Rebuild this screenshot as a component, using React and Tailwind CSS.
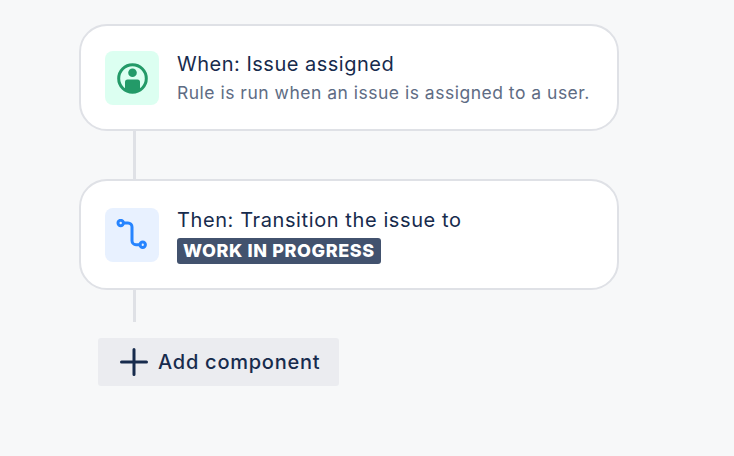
function UserIcon() {
    return (
        <svg width="32" height="32" viewBox="0 0 32 32" fill="none">
            <circle cx="16.5" cy="16.5" r="13.8" stroke="#239A68" strokeWidth="3" />
            <circle cx="16.5" cy="10.8" r="4.3" fill="#239A68" />
            <path d="M9 20a2.5 2.5 0 0 1 2.5-2.5h10a2.5 2.5 0 0 1 2.5 2.5v8a14 14 0 0 1-15 0z" fill="#239A68" />
        </svg>
    );
}

function RouteIcon() {
    return (
        <svg width="32" height="32" viewBox="0 0 32 32" fill="none" stroke="#2684FF" strokeWidth="3">
            <circle cx="4.7" cy="4" r="2.7" />
            <circle cx="26.7" cy="25.7" r="2.7" />
            <path d="M7.5 4h4.5a4 4 0 0 1 4 4v13.7a4 4 0 0 0 4 4h4" strokeLinecap="round" />
        </svg>
    );
}

function PlusIcon() {
    return (
        <svg width="28" height="28" viewBox="0 0 28 28" className="shrink-0" stroke="#172b4d" strokeWidth="3" strokeLinecap="round">
            <path d="M14 1.5v25M1.5 14h25" />
        </svg>
    );
}

function Connector({ height }) {
    return <div className={`ml-[54px] w-[3px] bg-[#dfe1e6] ${height}`}></div>;
}

export default function App() {
    return (
        <div className="min-h-screen bg-[#f7f8f9] pt-6 pl-[79px] font-['Inter',sans-serif]">
            <div className="w-[540px]">
                <div className="flex h-[107px] items-start rounded-[28px] border-2 border-[#dfe1e6] bg-white pt-[25px] pl-6">
                    <div className="flex h-[54px] w-[54px] shrink-0 items-center justify-center rounded-lg bg-[#dcfff1]">
                        <UserIcon />
                    </div>
                    <div className="mt-[1px] ml-[18px]">
                        <div className="text-[20px] leading-6 tracking-[0.5px] text-[#172b4d]">When: Issue assigned</div>
                        <div className="mt-[6px] text-[17.5px] leading-[22px] tracking-[0.5px] text-[#5e6c84]">Rule is run when an issue is assigned to a user.</div>
                    </div>
                </div>
                <Connector height="h-[48px]" />
                <div className="flex h-[111px] items-start rounded-[28px] border-2 border-[#dfe1e6] bg-white pt-[27px] pl-6">
                    <div className="flex h-[54px] w-[54px] shrink-0 items-center justify-center rounded-lg bg-[#e8f1ff]">
                        <RouteIcon />
                    </div>
                    <div className="ml-[18px]">
                        <div className="text-[20px] leading-6 tracking-[0.6px] text-[#172b4d]">Then: Transition the issue to</div>
                        <div className="mt-[6px] flex">
                            <span className="rounded-[3px] bg-[#42526e] px-[6px] text-[18px] leading-[26px] font-extrabold tracking-[0.6px] text-white">WORK IN PROGRESS</span>
                        </div>
                    </div>
                </div>
                <Connector height="h-[32px]" />
                <button className="mt-4 ml-[19px] flex h-12 w-[241px] items-center rounded-[3px] bg-[#ebecf0] pl-[22px] text-[20px] font-medium tracking-[0.75px] text-[#172b4d]">
                    <PlusIcon />
                    <span className="ml-[10px]">Add component</span>
                </button>
            </div>
        </div>
    );
}
